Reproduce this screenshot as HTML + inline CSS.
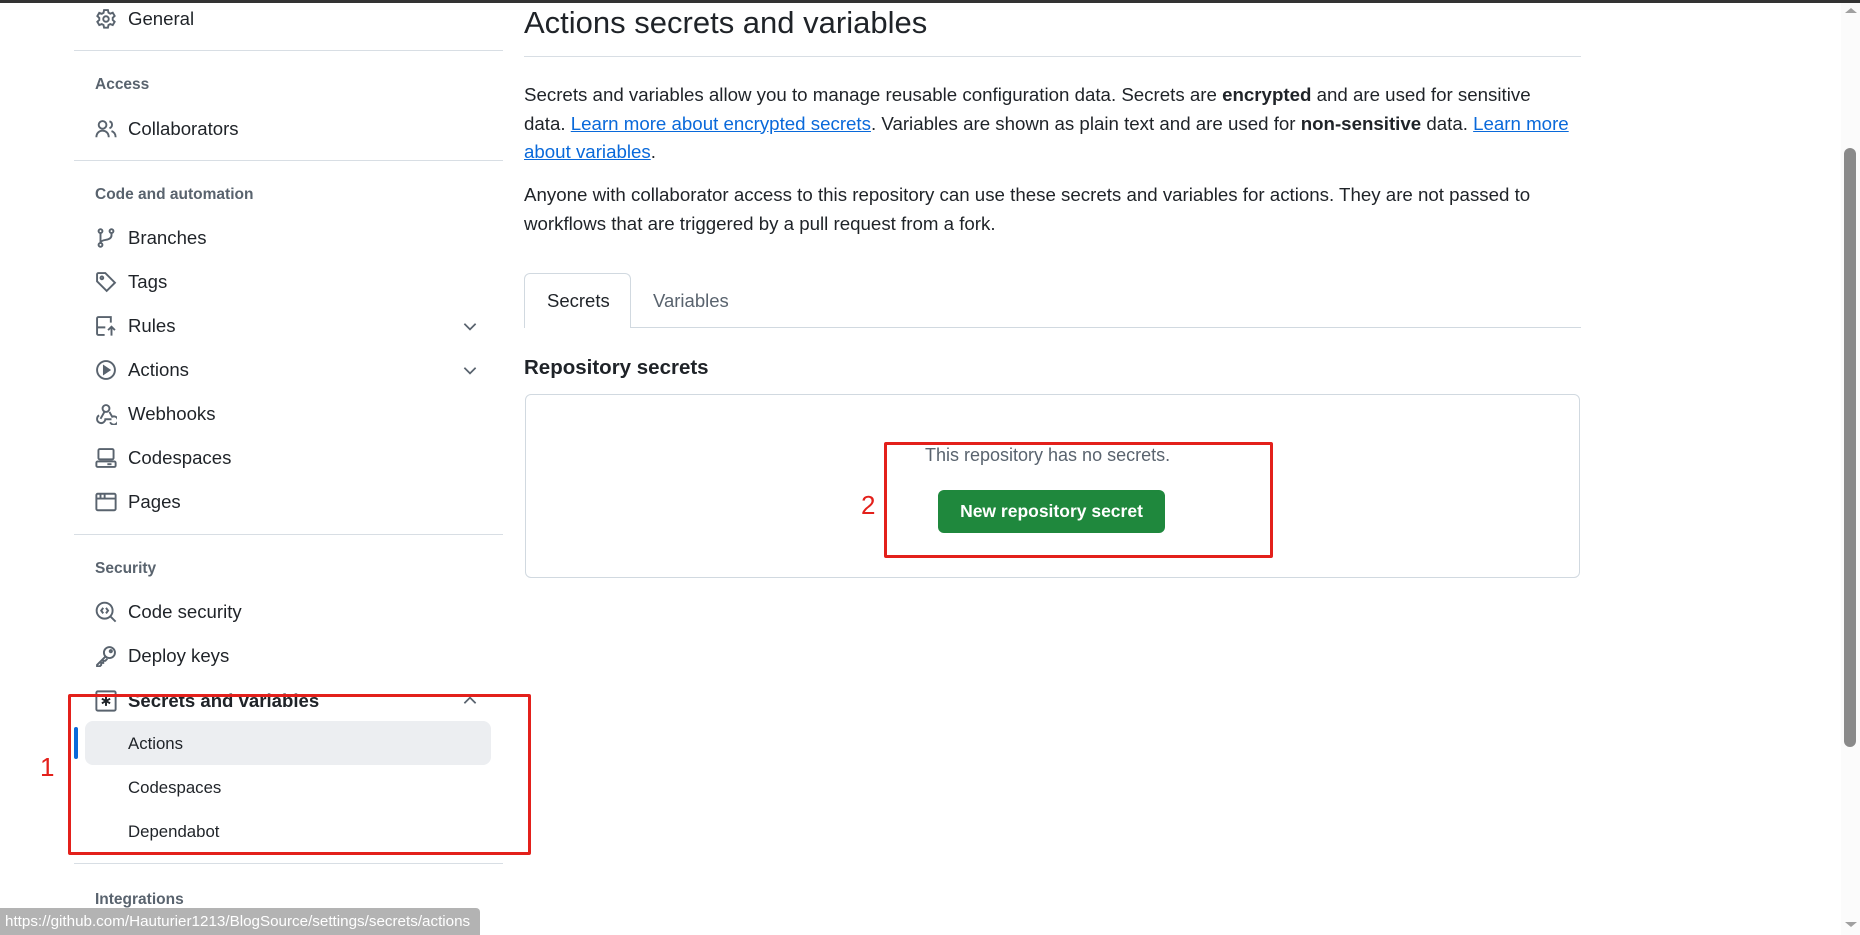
<!DOCTYPE html>
<html><head><meta charset="utf-8"><style>
*{margin:0;padding:0;box-sizing:border-box}
body{width:1860px;height:935px;overflow:hidden;background:#fff;font-family:"Liberation Sans",sans-serif;color:#1f2328;position:relative}
.a{position:absolute;white-space:nowrap}
.it{position:absolute;left:128px;font-size:18.6px;color:#1f2328;line-height:22px;transform:translateY(-10px)}
.hd{position:absolute;left:95px;font-size:15.5px;color:#59636e;font-weight:bold;line-height:20px;transform:translateY(-8px)}
.ic{position:absolute;left:95px;width:22px;height:22px;transform:translateY(-10px)}
.ln{position:absolute;left:74px;width:429px;height:1px;background:#d8dee4}
.sub{position:absolute;left:128px;font-size:16.8px;color:#1f2328;transform:translateY(-9px);line-height:20px}
.chev{position:absolute;left:461px;width:18px;height:18px;transform:translateY(-8px)}
p.t{position:absolute;left:524px;font-size:18.7px;line-height:28.5px;color:#1f2328;white-space:nowrap}
a{color:#0969da;text-decoration:underline}
</style></head><body>
<div class="a" style="left:0;top:0;width:1860px;height:3px;background:#333"></div>

<!-- sidebar -->
<svg class="ic" style="top:18px" viewBox="0 0 16 16" fill="none" stroke="#59636e" stroke-width="1.4"><path d="M6.6 1.5h2.8l.4 1.9 1.3.7 1.8-.7 1.4 2.4-1.4 1.3v1.6l1.4 1.3-1.4 2.4-1.8-.7-1.3.7-.4 1.9H6.6l-.4-1.9-1.3-.7-1.8.7-1.4-2.4 1.4-1.3V7.2L1.7 5.9l1.4-2.4 1.8.7 1.3-.7z"/><circle cx="8" cy="8" r="2"/></svg>
<div class="it" style="top:18px">General</div>
<div class="ln" style="top:50px"></div>
<div class="hd" style="top:83px">Access</div>
<svg class="ic" style="top:128px" viewBox="0 0 16 16" fill="none" stroke="#59636e" stroke-width="1.4"><circle cx="5.5" cy="5" r="2.8"/><path d="M1 14c0-3 2-4.8 4.5-4.8S10 11 10 14"/><path d="M10.5 2.4a2.6 2.6 0 0 1 0 5M12 9.5c1.8.6 3 2.2 3 4.5"/></svg>
<div class="it" style="top:128px">Collaborators</div>
<div class="ln" style="top:160px"></div>
<div class="hd" style="top:193px">Code and automation</div>
<svg class="ic" style="top:237px" viewBox="0 0 16 16" fill="none" stroke="#59636e" stroke-width="1.4"><circle cx="4" cy="3" r="1.4"/><circle cx="4" cy="13" r="1.4"/><circle cx="12" cy="3" r="1.4"/><path d="M4 4.4v7.2M12 4.4v1.6c0 2-2 3-4 3.3-2 .3-4 1-4 2.3"/></svg>
<div class="it" style="top:237px">Branches</div>
<svg class="ic" style="top:281px" viewBox="0 0 16 16" fill="none" stroke="#59636e" stroke-width="1.4"><path d="M1.5 2.5v5l7 7 6-6-7-7h-5a1 1 0 0 0-1 1z"/><circle cx="5" cy="5" r="1"/></svg>
<div class="it" style="top:281px">Tags</div>
<svg class="ic" style="top:325px" viewBox="0 0 16 16" fill="none" stroke="#59636e" stroke-width="1.4"><path d="M7 14.5H2.5a1 1 0 0 1-1-1v-11a1 1 0 0 1 1-1h9v4M1.5 9h6M12 15V8.5M9.5 11l2.5-2.5 2.5 2.5"/></svg>
<div class="it" style="top:325px">Rules</div>
<svg class="chev" style="top:325px" viewBox="0 0 16 16" fill="none" stroke="#59636e" stroke-width="1.5"><path d="M3 6l5 5 5-5"/></svg>
<svg class="ic" style="top:369px" viewBox="0 0 16 16" fill="none" stroke="#59636e" stroke-width="1.4"><circle cx="8" cy="8" r="6.5"/><path d="M6.5 5.3v5.4L10.5 8z" fill="#59636e"/></svg>
<div class="it" style="top:369px">Actions</div>
<svg class="chev" style="top:369px" viewBox="0 0 16 16" fill="none" stroke="#59636e" stroke-width="1.5"><path d="M3 6l5 5 5-5"/></svg>
<svg class="ic" style="top:413px" viewBox="0 0 16 16" fill="none" stroke="#59636e" stroke-width="1.4"><circle cx="8" cy="4" r="2.5"/><path d="M7 6.2L4 11.5M3 9a3 3 0 1 0 4.5 2.8H12M10.5 6.5l2 3.5a3 3 0 1 1-1.5 4"/></svg>
<div class="it" style="top:413px">Webhooks</div>
<svg class="ic" style="top:457px" viewBox="0 0 16 16" fill="none" stroke="#59636e" stroke-width="1.4"><rect x="2.5" y="1.5" width="11" height="7.5" rx="1"/><rect x="1" y="10.5" width="14" height="4" rx="1"/><path d="M9 12.5h3"/></svg>
<div class="it" style="top:457px">Codespaces</div>
<svg class="ic" style="top:501px" viewBox="0 0 16 16" fill="none" stroke="#59636e" stroke-width="1.4"><rect x="1" y="2" width="14" height="12" rx="1"/><path d="M1 5.5h14M4 2v3.5M7 2v3.5"/></svg>
<div class="it" style="top:501px">Pages</div>
<div class="ln" style="top:534px"></div>
<div class="hd" style="top:567px">Security</div>
<svg class="ic" style="top:611px" viewBox="0 0 16 16" fill="none" stroke="#59636e" stroke-width="1.4"><circle cx="7" cy="7" r="5.8"/><path d="M11.2 11.2L15 15M6 5L4.5 7 6 9M8 5l1.5 2L8 9"/></svg>
<div class="it" style="top:611px">Code security</div>
<svg class="ic" style="top:655px" viewBox="0 0 16 16" fill="none" stroke="#59636e" stroke-width="1.4"><circle cx="10.5" cy="5.5" r="4"/><path d="M7.6 8.4L1.5 14.5v1h2l1-1V13H6v-1.5h1.5l1.5-1.5"/><circle cx="11.5" cy="4.5" r=".8"/></svg>
<div class="it" style="top:655px">Deploy keys</div>
<svg class="ic" style="top:700px" viewBox="0 0 16 16" fill="none" stroke="#59636e" stroke-width="1.4"><rect x="1" y="1" width="14" height="14" rx="1"/><path d="M8 4.5v7M5 6.3l6 3.4M11 6.3l-6 3.4" stroke="#1f2328"/></svg>
<div class="it" style="top:700px;font-weight:bold">Secrets and variables</div>
<svg class="chev" style="top:700px" viewBox="0 0 16 16" fill="none" stroke="#59636e" stroke-width="1.5"><path d="M3 10l5-5 5 5"/></svg>
<div class="a" style="left:85px;top:721px;width:406px;height:44px;background:#eceef1;border-radius:8px"></div>
<div class="a" style="left:74px;top:727px;width:4px;height:32px;background:#0969da;border-radius:2px"></div>
<div class="sub" style="top:743px">Actions</div>
<div class="sub" style="top:787px">Codespaces</div>
<div class="sub" style="top:831px">Dependabot</div>
<div class="ln" style="top:863px"></div>
<div class="hd" style="top:898px">Integrations</div>
<div class="a" style="left:68px;top:694px;width:463px;height:161px;border:3px solid #e3201b;border-radius:2px"></div>
<div class="a" style="left:40px;top:752px;font-size:26px;color:#e3201b">1</div>
<div class="a" style="left:0;top:908px;width:480px;height:27px;background:#b3b3b3;border-top-right-radius:4px;color:#fff;font-size:15.2px;line-height:27px;padding-left:5px">https://github.com/Hauturier1213/BlogSource/settings/secrets/actions</div>

<!-- main -->
<div class="a" style="left:524px;top:3px;font-size:31px;line-height:40px;color:#1f2328">Actions secrets and variables</div>
<div class="a" style="left:524px;top:56px;width:1057px;height:1px;background:#d8dee4"></div>
<p class="t" style="top:81px">Secrets and variables allow you to manage reusable configuration data. Secrets are <b>encrypted</b> and are used for sensitive<br>data. <a>Learn more about encrypted secrets</a>. Variables are shown as plain text and are used for <b>non-sensitive</b> data. <a>Learn more</a><br><a>about variables</a>.</p>
<p class="t" style="top:181px">Anyone with collaborator access to this repository can use these secrets and variables for actions. They are not passed to<br>workflows that are triggered by a pull request from a fork.</p>
<div class="a" style="left:524px;top:327px;width:1057px;height:1px;background:#d1d9e0"></div>
<div class="a" style="left:524px;top:273px;width:107px;height:55px;border:1px solid #d1d9e0;border-bottom:none;border-radius:6px 6px 0 0;background:#fff"></div>
<div class="a" style="left:547px;top:290px;font-size:18.5px;line-height:22px;color:#1f2328">Secrets</div>
<div class="a" style="left:653px;top:290px;font-size:18.5px;line-height:22px;color:#59636e">Variables</div>
<div class="a" style="left:524px;top:356px;font-size:20.5px;font-weight:bold;line-height:24px">Repository secrets</div>
<div class="a" style="left:525px;top:394px;width:1055px;height:184px;border:1px solid #d1d9e0;border-radius:6px"></div>
<div class="a" style="left:925px;top:444px;font-size:18px;line-height:22px;color:#59636e">This repository has no secrets.</div>
<div class="a" style="left:938px;top:490px;width:227px;height:43px;background:#1f883d;border-radius:6px;color:#fff;font-weight:bold;font-size:17.5px;line-height:43px;text-align:center">New repository secret</div>
<div class="a" style="left:884px;top:442px;width:389px;height:116px;border:3px solid #e3201b;border-radius:2px"></div>
<div class="a" style="left:861px;top:490px;font-size:26px;color:#e3201b">2</div>

<!-- scrollbar -->
<div class="a" style="left:1841px;top:3px;width:19px;height:932px;background:#fbfbfb"></div>
<div class="a" style="left:1844px;top:148px;width:12px;height:599px;background:#8a8a8a;border-radius:6px"></div>
<div class="a" style="left:1845px;top:8px;width:0;height:0;border-left:6px solid transparent;border-right:6px solid transparent;border-bottom:5px solid #a0a0a0"></div>
<div class="a" style="left:1845px;top:922px;width:0;height:0;border-left:6px solid transparent;border-right:6px solid transparent;border-top:5px solid #a0a0a0"></div>
</body></html>
